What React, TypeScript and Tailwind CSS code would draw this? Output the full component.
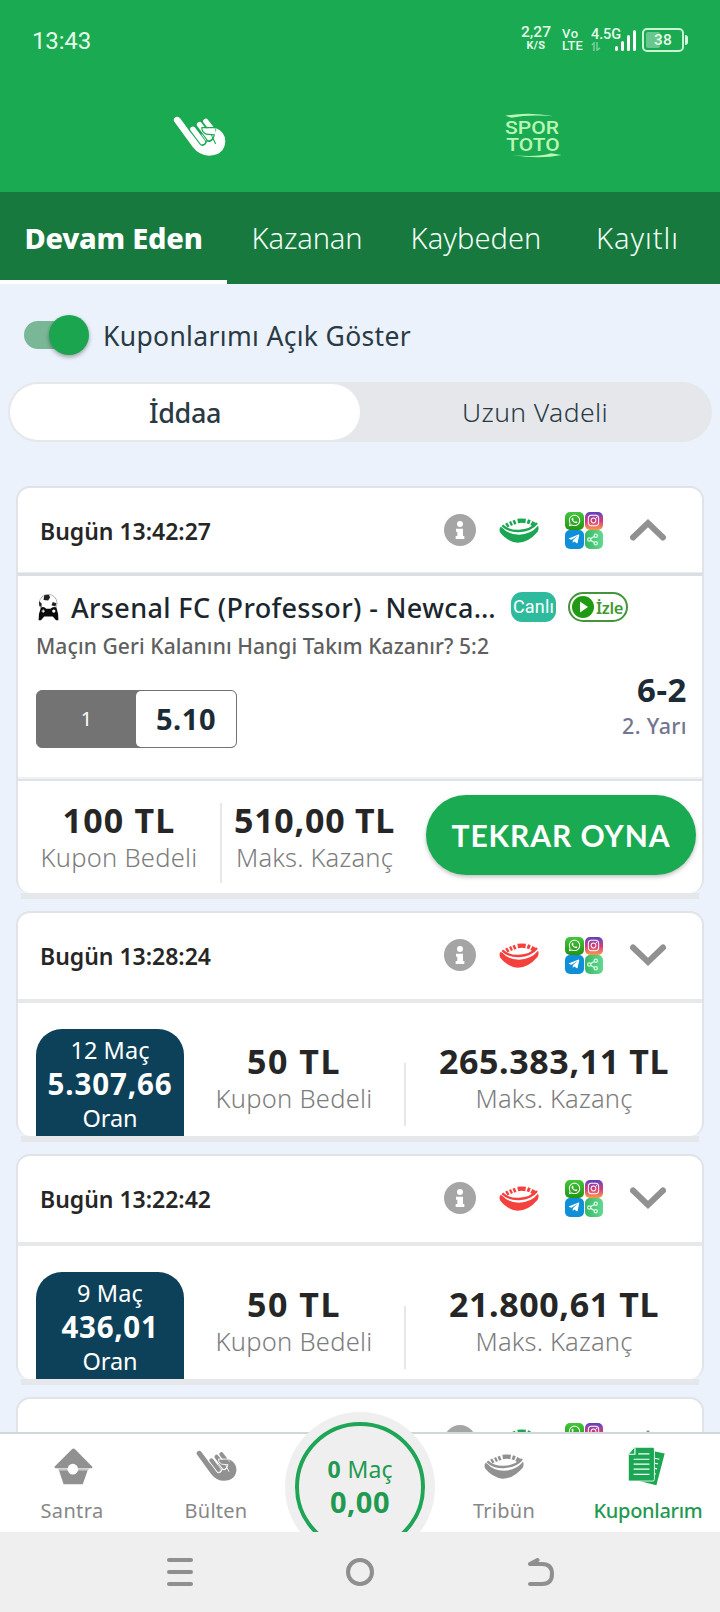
import { useLayoutEffect, useRef, type ReactNode } from "react";
import { FaInstagram, FaTelegramPlane, FaWhatsapp } from "react-icons/fa";
import { Share2 } from "lucide-react";

/** Single line of text whose tracking is adjusted so that it fills `w` pixels. */
function Fit({ w, className, children }: { w: number; className: string; children: string }) {
  const ref = useRef<HTMLSpanElement>(null);
  useLayoutEffect(() => {
    const el = ref.current;
    if (!el) return;
    el.style.letterSpacing = "0px";
    const natural = el.getBoundingClientRect().width;
    el.style.letterSpacing = `${(w - natural) / children.length}px`;
  }, [w, children]);
  return (
    <span ref={ref} className={`block w-fit whitespace-nowrap ${className}`}>
      {children}
    </span>
  );
}

function HandIcon({ fg, bg, className }: { fg: string; bg: string; className: string }) {
  return (
    <svg viewBox="517 346 160 122" className={className} fill="none" strokeLinecap="round" strokeLinejoin="round">
      <path
        fill={fg}
        d="M520 361Q517 351 526 348Q534 346 539 353L570 395L600 408L612 380L642 380Q675 392 675 422Q672 463 626 465Q596 464 576 438Z"
      />
      <path stroke={bg} strokeWidth="22" d="M616 361L636 388M597 371L627 412M577 385L606 424" />
      <path stroke={fg} strokeWidth="16" d="M616 361L632 382M597 371L627 411M577 385L606 423" />
      <path fill={fg} d="M604 382H644L650 420L641 402L618 400Q606 396 604 382Z" />
      <path stroke={bg} strokeWidth="3.5" d="M642 380H604Q604 394 617 400L642 402L638 413L645 428M606 432Q616 432 618 420Q628 424 636 414" />
    </svg>
  );
}

function BowlIcon({ color, className }: { color: string; className: string }) {
  return (
    <svg viewBox="418 682 120 75" className={className} fill="none">
      <path
        fill={color}
        d="M420 714Q421 706 428 711Q446 732 478 732Q514 731 535 705Q539 714 534 723Q506 756 474 756Q442 753 421 725Q419 719 420 714Z"
      />
      <path stroke={color} strokeWidth="7" d="M428 704Q446 722 478 721Q514 719 532 697" />
      <path
        stroke={color}
        strokeWidth="13"
        d="M440 705L446 701M451 700L457 697M461 696L468 693M474 691Q486 689 498 691M503 692L511 695M515 697L524 702"
      />
    </svg>
  );
}

function InfoIcon() {
  return (
    <svg viewBox="252 672 96 96" className="size-8">
      <circle cx="300" cy="720" r="48" fill="#a5a5a5" />
      <circle cx="300" cy="702" r="9" fill="#fff" />
      <path fill="#fff" d="M288 716H309V738H313V747H287V738H292V725H288Z" />
    </svg>
  );
}

function Chevron({ up }: { up: boolean }) {
  return (
    <svg viewBox="0 0 36 22" className="h-[22px] w-9" fill="none" stroke="#919191" strokeWidth="6" strokeLinecap="round" strokeLinejoin="miter">
      <path d={up ? "M3 18.5L18 4.2L33 18.5" : "M3 3.5L18 17.8L33 3.5"} />
    </svg>
  );
}

function SocialIcon() {
  return (
    <div className="grid w-[38px] grid-cols-2 gap-x-[1px] text-white">
      <div className="flex size-[18.5px] items-center justify-center rounded-[5px] bg-linear-to-b from-[#43c63b] to-[#249313]">
        <FaWhatsapp className="size-[13px]" />
      </div>
      <div className="flex size-[18.5px] items-center justify-center rounded-[5px] bg-linear-to-b from-[#5a3cc0] via-[#d4357c] to-[#fa9a3c]">
        <FaInstagram className="size-[13px]" />
      </div>
      <div className="flex size-[18.5px] items-center justify-center rounded-[5px] bg-[#0f8fd8]">
        <FaTelegramPlane className="size-[12px]" />
      </div>
      <div className="flex size-[18.5px] items-center justify-center rounded-[5px] bg-linear-to-r from-[#38b865] to-[#62d892]">
        <Share2 className="mr-[2px] size-[13px]" color="#d5fbe2" strokeWidth={2.4} />
      </div>
    </div>
  );
}

function ESportIcon() {
  return (
    <svg viewBox="116 70 62 82" className="h-[27px] w-[21px]">
      <circle cx="146" cy="98" r="27" fill="#fff" stroke="#8a8a8a" strokeWidth="2" />
      <path fill="#222" d="M134 74L148 72L152 80L146 90L132 88ZM118 92L126 98L126 110L119 106ZM160 94L171 98L168 108L156 104Z" />
      <path
        fill="#0a0a0a"
        d="M124 111Q134 107 140 115H153Q160 107 171 111Q178 130 177 150H170L160 138H134L124 150H117Q116 130 124 111Z"
      />
      <path stroke="#fff" strokeWidth="3" fill="none" d="M126 122H136M131 117V127" />
      <circle cx="163" cy="122" r="5" fill="#fff" />
    </svg>
  );
}

function CouponsIcon() {
  return (
    <svg viewBox="805 196 112 118" className="mr-1 h-[39px] w-[37px]">
      <path fill="#1ba653" d="M880 208L916 216L891 312L842 300Z" />
      <path stroke="#fff" strokeWidth="3.5" fill="none" d="M886 230L900 233M886 245L896 247M884 260L893 262M883 276L889 278" />
      <path fill="#1ba653" stroke="#fff" strokeWidth="2.5" d="M824 197H880Q885 197 885 202V294Q885 299 880 299H810Q806 299 806 295V218Z" />
      <path stroke="#fff" strokeWidth="3.5" fill="none" d="M826 198V218H807M836 217H870M822 233H870M822 248H870M822 263H870M822 279H870" />
    </svg>
  );
}

function HouseIcon() {
  return (
    <svg viewBox="162 203 118 110" className="ml-[3px] h-[37px] w-[39px]">
      <path fill="#919191" d="M217 205Q221 202 225 205L278 259Q279 263 275 263H167Q162 262 164 258Z" />
      <path fill="#919191" d="M177 269H264L249 312H191Z" />
      <path fill="#c8c8c8" d="M175 264H267V269H175Z" />
      <circle cx="219" cy="266" r="16" fill="#fff" />
    </svg>
  );
}

function StatusBar() {
  return (
    <div className="flex h-20 items-start pr-8 pl-8 font-[Roboto,sans-serif] text-[#e4fbe9]">
      <Fit w={59} className="mt-[26px] text-[24px] leading-[30px]">13:43</Fit>
      <div className="mt-[24px] ml-auto flex w-[30px] flex-col items-center font-medium">
        <Fit w={30} className="text-[15.5px] leading-[16px]">2,27</Fit>
        <Fit w={19} className="text-[11px] leading-[11px] font-bold">K/S</Fit>
      </div>
      <div className="mt-[28px] ml-[11px] font-medium">
        <Fit w={17} className="text-[13px] leading-[12px]">Vo</Fit>
        <Fit w={21} className="text-[13px] leading-[12px]">LTE</Fit>
      </div>
      <div className="mt-[28px] ml-[8px] w-[24px] font-medium">
        <Fit w={30} className="text-[14.5px] leading-[14px]">4.5G</Fit>
        <svg viewBox="0 0 10 9" className="h-[9px] w-[10px] opacity-40" fill="none" stroke="#fff" strokeWidth="1.6">
          <path d="M1 3L3 1V9M6 0V8L9 6" />
        </svg>
      </div>
      <div className="mt-[30px] flex h-[21px] items-end gap-[3px]">
        <div className="h-[5px] w-[3px] rounded-full bg-white" />
        <div className="h-[10px] w-[3px] rounded-full bg-white" />
        <div className="h-[16px] w-[3px] rounded-full bg-white" />
        <div className="h-[21px] w-[3px] rounded-full bg-white" />
      </div>
      <div className="mt-[28px] ml-[6px] flex h-[24px] items-center">
        <div className="relative flex h-[24px] w-[42px] items-center justify-center rounded-[5px] border-2 border-[#c9f3d5]">
          <div className="absolute top-[2px] bottom-[2px] left-[2px] w-[14px] rounded-[2px] bg-white/35" />
          <Fit w={18} className="relative text-[15.5px] leading-[20px] font-medium">38</Fit>
        </div>
        <div className="ml-[1px] h-[10px] w-[3px] rounded-r bg-[#d9f7e0]" />
      </div>
    </div>
  );
}

function Header() {
  return (
    <header className="h-48 bg-[#1aaa52]">
      <StatusBar />
      <div className="flex items-start">
        <div className="w-1/2 pt-9 pl-[172.5px]">
          <HandIcon fg="#fff" bg="#1aaa52" className="h-[41px] w-[53px]" />
        </div>
        <div className="w-1/2 pt-[33px] pl-[145px]">
          <svg viewBox="436 340 170 136" className="h-[45.3px] w-[56.7px]" fill="#b8f7b4">
            <path d="M437 348Q510 335 582 350Q510 343 455 354Z" />
            <text x="436" y="402" fontSize="56" fontWeight="500" fontFamily="Roboto" textLength="162" lengthAdjust="spacingAndGlyphs">SPOR</text>
            <text x="440" y="455" fontSize="56" fontWeight="500" fontFamily="Roboto" textLength="160" lengthAdjust="spacingAndGlyphs">TOTO</text>
            <path d="M458 466Q530 474 574 461L606 466Q540 480 458 466Z" />
          </svg>
        </div>
      </div>
    </header>
  );
}

function Tabs() {
  const light = "text-[29px] leading-[40px] font-light";
  return (
    <nav className="flex h-[92px] bg-[#17793e] text-[#f1fff6]">
      <div className="flex w-[227px] items-center justify-center border-b-4 border-white pt-1">
        <Fit w={178} className="text-[29px] leading-[40px] font-extrabold text-white">Devam Eden</Fit>
      </div>
      <div className="flex w-[160px] items-center justify-center">
        <Fit w={111} className={light}>Kazanan</Fit>
      </div>
      <div className="flex w-[178px] items-center justify-center">
        <Fit w={131} className={light}>Kaybeden</Fit>
      </div>
      <div className="flex w-[145px] items-center justify-center">
        <Fit w={83} className={light}>Kayıtlı</Fit>
      </div>
    </nav>
  );
}

function TicketHeader({ time, color, up }: { time?: string; color: string; up: boolean }) {
  return (
    <div className="flex h-[84px] items-center pr-[36px] pl-[22px]">
      <div className="mr-auto pt-[2px]">
        {time && <Fit w={171} className="text-[23px] leading-[30px] font-semibold text-[#262626]">{`Bugün ${time}`}</Fit>}
      </div>
      <InfoIcon />
      <BowlIcon color={color} className="ml-[23px] h-[25px] w-10" />
      <div className="mr-[27px] ml-[26px]">
        <SocialIcon />
      </div>
      <Chevron up={up} />
    </div>
  );
}

function Amount({ value, valueWidth, label }: { value: string; valueWidth: number; label: string }) {
  return (
    <div className="flex flex-col items-center">
      <Fit w={valueWidth} className="text-[34px] leading-[38px] font-bold text-[#262626]">{value}</Fit>
      <Fit w={157} className="text-[25.5px] leading-[36px] font-light text-[#7c7c7c]">{label}</Fit>
    </div>
  );
}

function Ticket({ children }: { children: ReactNode }) {
  return (
    <section>
      <div className="rounded-[14px] border-2 border-b-0 border-[#e0e4e9] bg-white">{children}</div>
      <div className="relative mx-[5px] h-1.5 bg-[#e5e7eb]" />
    </section>
  );
}

function OpenTicket() {
  return (
    <Ticket>
      <TicketHeader time="13:42:27" color="#1ba653" up />
      <div className="h-1 border-t border-[#e8ebee] bg-[#dbdfe4]" />
      <div className="h-[201px] pt-4 pr-[15px] pl-[18px]">
        <div className="flex h-[30px] items-center pl-[2px]">
          <ESportIcon />
          <Fit w={425} className="mt-[2px] ml-[12px] text-[27px] leading-[30px] font-medium text-[#1c262d]">
            Arsenal FC (Professor) - Newca…
          </Fit>
          <div className="ml-[15px] flex h-[30px] w-[45px] items-center justify-center rounded-[11px] bg-[#2ebb9d] text-white">
            <Fit w={41} className="font-[Roboto,sans-serif] text-[18px] leading-[20px]">Canlı</Fit>
          </div>
          <div className="ml-3 flex h-[30px] w-[60px] items-center rounded-full border-2 border-[#43943a] pl-[2px] text-[#3f9a30]">
            <svg viewBox="0 0 22 22" className="mr-[2px] size-[22px] shrink-0">
              <circle cx="11" cy="11" r="11" fill="#209a12" />
              <path fill="#fff" d="M8 5.5V16.5L16 11Z" />
            </svg>
            <Fit w={27} className="pt-[1px] text-[16.5px] leading-[20px] font-semibold">İzle</Fit>
          </div>
        </div>
        <Fit w={453} className="mt-[10px] text-[21px] leading-[28px] font-medium text-[#606060]">
          Maçın Geri Kalanını Hangi Takım Kazanır? 5:2
        </Fit>
        <div className="flex items-start justify-between">
          <div className="mt-[30px] flex h-[58px] w-[201px] rounded-[6px] border-[1.5px] border-[#737373] bg-[#737373]">
            <div className="flex w-[99px] items-center justify-center text-[20px] text-white">1</div>
            <div className="flex flex-1 items-center justify-center rounded-[5px] bg-white">
              <Fit w={60} className="text-[29px] leading-[34px] font-bold text-[#1c2b36]">5.10</Fit>
            </div>
          </div>
          <div className="mt-3 flex flex-col items-end">
            <Fit w={50} className="text-[33px] leading-[36px] font-bold text-[#1c2b36]">6-2</Fit>
            <Fit w={65} className="mt-[4px] text-[21.5px] leading-[28px] font-medium text-[#74758f]">2. Yarı</Fit>
          </div>
        </div>
      </div>
      <div className="h-1 border-b-2 border-[#dfe3e8] bg-[#eff2f5]" />
      <div className="flex h-[112px]">
        <div className="w-[202px] pt-5">
          <Amount value="100 TL" valueWidth={113} label="Kupon Bedeli" />
        </div>
        <div className="mt-[22px] h-20 w-[2px] bg-[#e5e7eb]" />
        <div className="w-[185px] pt-5">
          <Amount value="510,00 TL" valueWidth={161} label="Maks. Kazanç" />
        </div>
        <div className="mt-[14px] ml-[19px] flex h-20 w-[270px] items-center justify-center rounded-full bg-[#1aaa52] shadow-[0_2px_4px_rgba(0,0,0,0.25)]">
          <Fit w={219} className="font-[Lato,sans-serif] text-[30px] leading-[36px] font-bold text-white">TEKRAR OYNA</Fit>
        </div>
      </div>
    </Ticket>
  );
}

type ClosedProps = { time: string; count: string; countWidth: number; odds: string; oddsWidth: number; win: string; winWidth: number };

function ClosedTicket({ time, count, countWidth, odds, oddsWidth, win, winWidth }: ClosedProps) {
  return (
    <Ticket>
      <TicketHeader time={time} color="#f5413d" up={false} />
      <div className="mt-[2px] h-1 bg-[#e7e8e9]" />
      <div className="flex h-[133px] pl-[18px]">
        <div className="mt-[26px] flex w-[148px] flex-col items-center rounded-t-[26px] bg-[#0d4159] pt-[4px] text-white">
          <Fit w={countWidth} className="text-[23.5px] leading-[34px]">{count}</Fit>
          <Fit w={oddsWidth} className="text-[29.5px] leading-[34px] font-bold">{odds}</Fit>
          <Fit w={55} className="text-[23.5px] leading-[34px]">Oran</Fit>
        </div>
        <div className="w-[220px] pt-[39px]">
          <Amount value="50 TL" valueWidth={94} label="Kupon Bedeli" />
        </div>
        <div className="mt-[60px] h-[63px] w-[2px] bg-[#e5e7eb]" />
        <div className="flex-1 pt-[39px]">
          <Amount value={win} valueWidth={winWidth} label="Maks. Kazanç" />
        </div>
      </div>
    </Ticket>
  );
}

function NavItem({ label, w, active, children }: { label: string; w: number; active?: boolean; children: ReactNode }) {
  return (
    <div className={`flex w-36 flex-col items-center ${active ? "font-medium text-[#1f9a50]" : "text-[#878787]"}`}>
      <div className="flex h-[64px] items-center">{children}</div>
      <Fit w={w} className="text-[20px] leading-[26px]">{label}</Fit>
    </div>
  );
}

function BottomNav() {
  return (
    <nav className="relative flex h-[100px] border-t-2 border-[#cfd8da] bg-white">
      <NavItem label="Santra" w={63}><HouseIcon /></NavItem>
      <NavItem label="Bülten" w={63}><HandIcon fg="#919191" bg="#fff" className="h-[32px] w-[41px]" /></NavItem>
      <div className="w-36" />
      <NavItem label="Tribün" w={62}><BowlIcon color="#919191" className="h-[25px] w-10" /></NavItem>
      <NavItem label="Kuponlarım" w={109} active><CouponsIcon /></NavItem>
      <div className="absolute -top-[22px] left-[285px] h-[120px] w-[150px] overflow-hidden">
        <div className="size-[150px] rounded-full bg-[#efefef] p-[10px]">
          <div className="flex size-[130px] flex-col items-center rounded-full border-4 border-[#1fa556] pt-[27px] text-[#1f9a50]">
            <div className="flex items-center gap-[6px]">
              <Fit w={14} className="text-[23px] leading-[32px] font-bold">0</Fit>
              <Fit w={45} className="text-[23px] leading-[32px]">Maç</Fit>
            </div>
            <Fit w={60} className="text-[29px] leading-[34px] font-bold">0,00</Fit>
          </div>
        </div>
      </div>
    </nav>
  );
}

function SystemNav() {
  return (
    <div className="flex h-20 items-center bg-[#efefef]">
      <div className="flex w-[360px] flex-col items-center gap-2">
        <div className="h-1 w-[26px] rounded-full bg-[#8f8f8f]" />
        <div className="h-1 w-[26px] rounded-full bg-[#8f8f8f]" />
        <div className="h-1 w-[26px] rounded-full bg-[#8f8f8f]" />
      </div>
      <div className="-ml-[14px] size-7 rounded-full border-4 border-[#8f8f8f]" />
      <svg viewBox="0 0 26 28" className="ml-[154px] h-7 w-[26px]" fill="none" stroke="#8f8f8f" strokeWidth="4" strokeLinecap="round" strokeLinejoin="round">
        <path d="M9.5 2L2 6H14Q24 6 24 16Q24 26 14 26H2" />
      </svg>
    </div>
  );
}

export default function App() {
  return (
    <div className="flex h-[1612px] w-[720px] flex-col overflow-hidden bg-[#ebf2fb] font-['Noto_Sans','Open_Sans',sans-serif]">
      <Header />
      <Tabs />
      <main className="min-h-0 flex-1 overflow-hidden">
        <div className="flex items-center pt-[31px] pl-6 text-[#2a3a44]">
          <div className="flex h-10 w-[65px] items-center">
            <div className="flex h-7 w-[61px] items-center rounded-full bg-[#7ab797]">
              <div className="ml-[25px] size-10 shrink-0 rounded-full bg-[#1ba54f] shadow-[0_2px_4px_rgba(0,0,0,0.35)]" />
            </div>
          </div>
          <Fit w={308} className="ml-[14px] pt-[2px] text-[26.5px] leading-[36px]">Kuponlarımı Açık Göster</Fit>
        </div>
        <div className="mx-2 mt-[27px] flex h-[60px] rounded-full bg-[#e5e7eb] p-[2px] text-[#2a3a44]">
          <div className="flex w-[350px] items-center justify-center rounded-full bg-white pt-[1px]">
            <Fit w={72} className="text-[27px] leading-[36px] font-medium">İddaa</Fit>
          </div>
          <div className="flex flex-1 items-center justify-center">
            <Fit w={146} className="text-[26.5px] leading-[36px] font-light">Uzun Vadeli</Fit>
          </div>
        </div>
        <div className="mx-4 mt-11 flex flex-col gap-3">
          <OpenTicket />
          <ClosedTicket time="13:28:24" count="12 Maç" countWidth={79} odds="5.307,66" oddsWidth={125} win="265.383,11 TL" winWidth={230} />
          <ClosedTicket time="13:22:42" count="9 Maç" countWidth={66} odds="436,01" oddsWidth={97} win="21.800,61 TL" winWidth={210} />
          <Ticket>
            <TicketHeader color="#1ba653" up />
          </Ticket>
        </div>
      </main>
      <BottomNav />
      <SystemNav />
    </div>
  );
}
